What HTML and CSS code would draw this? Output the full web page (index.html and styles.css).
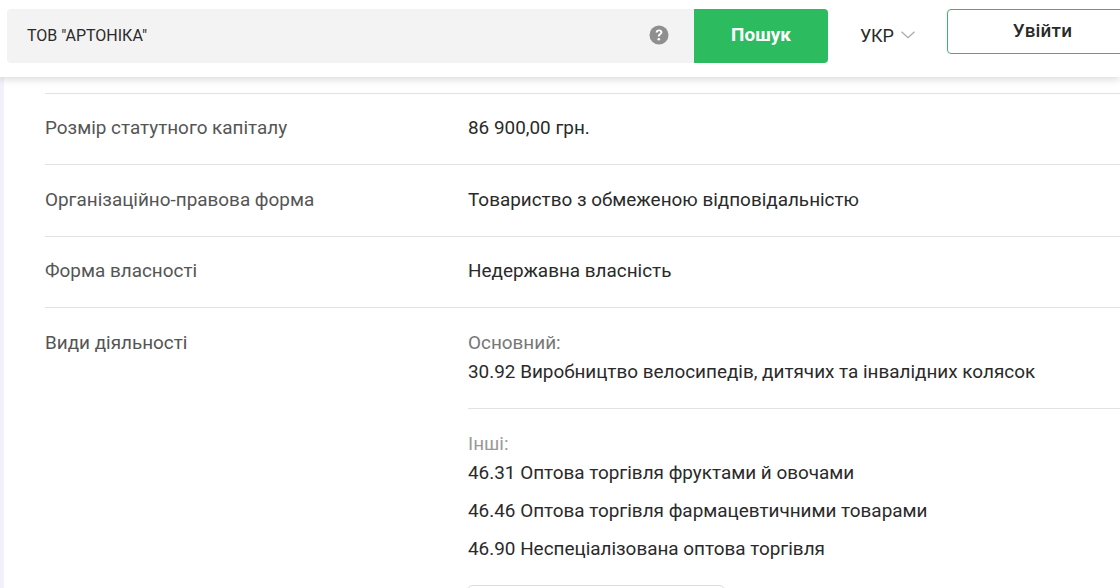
FILE: index.html
```html
<!DOCTYPE html>
<html lang="uk">
<head>
<meta charset="utf-8">
<title>ТОВ "АРТОНІКА"</title>
<link rel="stylesheet" href="styles.css">
</head>
<body>
<header class="topbar">
  <div class="search">
    <span class="query">ТОВ "АРТОНІКА"</span>
    <svg class="help" width="20" height="20" viewBox="0 0 20 20"><circle cx="10" cy="10" r="9.5" fill="#8f8f8f"/><path d="M6.700 7.600c0-2 1.400-3.200 3.400-3.200 2 0 3.300 1.100 3.300 2.800 0 2.300-2.700 2.300-2.700 4.400H8.900c0-3 2.500-2.900 2.500-4.300 0-.7-.5-1.100-1.300-1.100-.8 0-1.400.5-1.400 1.400z" fill="#fff"/><circle cx="9.800" cy="14.200" r="1.300" fill="#fff"/></svg>
    <button class="go">Пошук</button>
  </div>
  <div class="lang">УКР
    <svg width="14" height="8" viewBox="0 0 14 8"><path d="M.5.7 7 6.800 13.500.7" fill="none" stroke="#a8a8a8" stroke-width="1.200"/></svg>
  </div>
  <button class="login">Увійти</button>
</header>
<main class="page">
  <section class="card">
    <div class="row r1"><div class="label">Розмір статутного капіталу</div><div class="value">86 900,00 грн.</div></div>
    <div class="row r2"><div class="label">Організаційно-правова форма</div><div class="value">Товариство з обмеженою відповідальністю</div></div>
    <div class="row r3"><div class="label">Форма власності</div><div class="value">Недержавна власність</div></div>
    <div class="row r4">
      <div class="label">Види діяльності</div>
      <div class="value">
        <div class="main-act">
          <div class="cap">Основний:</div>
          <div class="act">30.92 Виробництво велосипедів, дитячих та інвалідних колясок</div>
        </div>
        <div class="other-act">
          <div class="cap light">Інші:</div>
          <div class="act">46.31 Оптова торгівля фруктами й овочами</div>
          <div class="act">46.46 Оптова торгівля фармацевтичними товарами</div>
          <div class="act">46.90 Неспеціалізована оптова торгівля</div>
          <div class="more"></div>
        </div>
      </div>
    </div>
  </section>
</main>
</body>
</html>
```
FILE: styles.css
```css
* { box-sizing: border-box; }
html, body { margin: 0; height: 588px; overflow: hidden; background: #fff; }
body { font-family: Roboto, "Liberation Sans", sans-serif; color: #2a2a2a; font-size: 18.9px; position: relative; }
.topbar { position: absolute; z-index: 2; top: 0; left: 0; right: 0; height: 77px; background: #fff; box-shadow: 0 2px 8px rgba(0,0,0,.16); display: flex; align-items: flex-start; padding: 9px 0 0 7px; overflow: hidden; }
.search { width: 821px; height: 54px; background: #f3f3f3; border-radius: 4px; display: flex; align-items: center; flex: none; }
.query { font-size: 16px; padding: 0 0 2px 20px; flex: 1; letter-spacing: 0; }
.help { margin-right: 25px; flex: none; position: relative; top: -1px; }
.go { width: 134px; height: 54px; flex: none; background: #2dbb60; color: #fff; border: 0; border-radius: 0 4px 4px 0; font: 700 18.900px Roboto, sans-serif; padding: 0 0 4px; }
.lang { width: 119px; flex: none; height: 54px; display: flex; align-items: center; gap: 7px; padding: 0 0 2px 32px; font-size: 18px; font-weight: 400; letter-spacing: -.2px; }
.login { flex: none; width: 190px; height: 45px; background: #fff; border: 1px solid #3cb56b; border-radius: 4px; font: 500 18.900px Roboto, sans-serif; color: #2a2a2a; letter-spacing: .2px; padding: 0 0 3px 1px; margin-right: -17px; }
.page { height: 588px; background: #f1f1fa; padding: 77px 0 0 4px; }
.card { background: #fff; height: 511px; padding: 16px 0 0 41px; overflow: hidden; }
.row { display: flex; border-top: 1px solid #e2e2e2; }
.r1 { height: 71px; padding-top: 23px; }
.r2 { height: 72px; padding-top: 24px; }
.r3 { height: 71px; padding-top: 23px; }
.r4 { padding-top: 24px; }
.label { width: 423px; flex: none; color: #555; line-height: 21px; }
.value { flex: 1; line-height: 21px; }
.cap { color: #777; line-height: 21px; }
.cap.light { color: #999; }
.main-act { height: 76px; }
.main-act .act { margin-top: 8px; }
.other-act { border-top: 1px solid #e2e2e2; padding-top: 24px; }
.other-act .act { margin-top: 8px; line-height: 21px; }
.other-act .act + .act { margin-top: 16.500px; }
.other-act .act + .act + .act { margin-top: 17px; }
.more { width: 256px; height: 40px; margin-top: 26px; border: 1px solid #ddd; border-radius: 4px; }
```
